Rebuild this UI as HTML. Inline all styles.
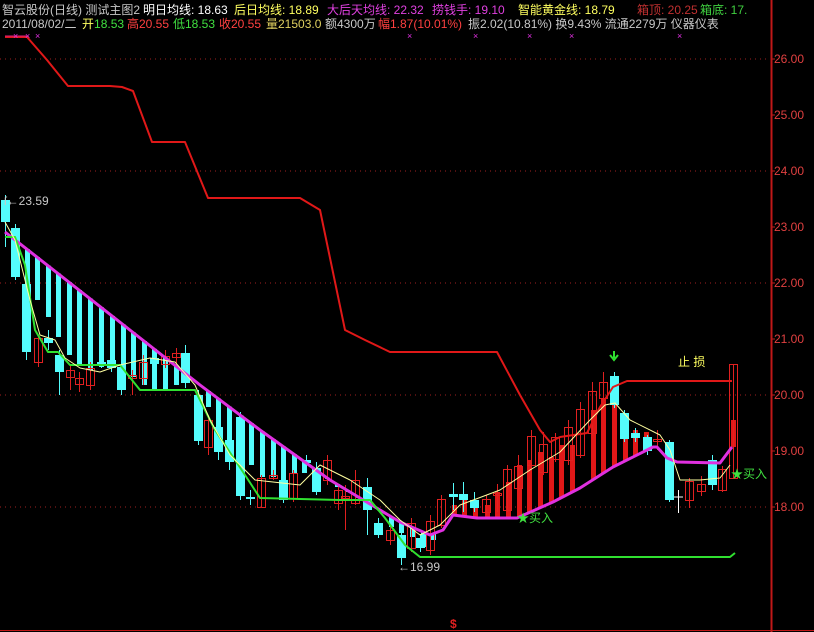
<!DOCTYPE html>
<html><head><meta charset="utf-8">
<style>
html,body{margin:0;padding:0;background:#000;}
body{width:814px;height:632px;overflow:hidden;position:relative;font-family:"Liberation Sans","Noto Sans CJK SC",sans-serif;font-size:12px;}
.t{position:absolute;white-space:nowrap;line-height:14px;}
svg{position:absolute;left:0;top:0;}
</style></head><body>
<svg id="s" width="814" height="632" viewBox="0 0 814 632"></svg>
<div class="t" style="left:2px;top:3px;color:#c8c8c8">智云股份(日线) 测试主图2</div>
<div class="t" style="left:143px;top:3px;color:#fff">明日均线: 18.63</div>
<div class="t" style="left:234px;top:3px;color:#ffff60">后日均线: 18.89</div>
<div class="t" style="left:327px;top:3px;color:#e040e0">大后天均线: 22.32</div>
<div class="t" style="left:432px;top:3px;color:#e040e0">捞钱手: 19.10</div>
<div class="t" style="left:518px;top:3px;color:#ffff60">智能黄金线: 18.79</div>
<div class="t" style="left:637px;top:3px;color:#c03030">箱顶: 20.25</div>
<div class="t" style="left:700px;top:3px;color:#40d040">箱底: 17.</div>
<div class="t" style="left:2px;top:17px;color:#c8c8c8">2011/08/02/二</div>
<div class="t" style="left:82px;top:17px;color:#ffff60">开<span style="color:#40e040">18.53</span></div>
<div class="t" style="left:127px;top:17px;color:#ff4040">高20.55</div>
<div class="t" style="left:173px;top:17px;color:#40e040">低18.53</div>
<div class="t" style="left:219px;top:17px;color:#ff4040">收20.55</div>
<div class="t" style="left:266px;top:17px;color:#e0d060">量21503.0</div>
<div class="t" style="left:325px;top:17px;color:#c8c8c8">额4300万</div>
<div class="t" style="left:378px;top:17px;color:#ff4040">幅1.87(10.01%)</div>
<div class="t" style="left:468px;top:17px;color:#c8c8c8">振2.02(10.81%) 换9.43% 流通2279万 仪器仪表</div>
<div class="t" style="left:774px;top:52px;color:#e04040">26.00</div>
<div class="t" style="left:774px;top:108px;color:#e04040">25.00</div>
<div class="t" style="left:774px;top:164px;color:#e04040">24.00</div>
<div class="t" style="left:774px;top:220px;color:#e04040">23.00</div>
<div class="t" style="left:774px;top:276px;color:#e04040">22.00</div>
<div class="t" style="left:774px;top:332px;color:#e04040">21.00</div>
<div class="t" style="left:774px;top:388px;color:#e04040">20.00</div>
<div class="t" style="left:774px;top:444px;color:#e04040">19.00</div>
<div class="t" style="left:774px;top:500px;color:#e04040">18.00</div>
<div class="t" style="left:4px;top:194px;color:#c8c8c8">ſ←23.59</div>
<div class="t" style="left:398px;top:560px;color:#c8c8c8">←16.99</div>
<div class="t" style="left:517px;top:511px;color:#40e040">★买入</div>
<div class="t" style="left:731px;top:467px;color:#40e040">★买入</div>
<div class="t" style="left:678px;top:355px;color:#ffff60">止 损</div>
<div class="t" style="left:450px;top:617px;color:#e02020;font-weight:bold">$</div>
<script>
var s=document.getElementById('s'),h='';
function L(pts,c,w){h+='<polyline fill="none" stroke="'+c+'" stroke-width="'+w+'" stroke-linejoin="round" points="'+pts.map(function(p){return p.join(',')}).join(' ')+'"/>';}
[59,171,283,395,507].forEach(function(y){h+='<line x1="0" y1="'+y+'" x2="770" y2="'+y+'" stroke="#a02020" stroke-dasharray="1,4"/>';});
[59,115,171,227,283,339,395,451,507].forEach(function(y){h+='<line x1="771" y1="'+y+'" x2="775" y2="'+y+'" stroke="#c02020"/>';});
h+='<line x1="771.5" y1="0" x2="771.5" y2="632" stroke="#c01818" stroke-width="2"/>';
h+='<line x1="0" y1="630.5" x2="814" y2="630.5" stroke="#c01818"/>';
var mag=[[5,232],[200,385],[260,430],[330,480],[400,522],[430,535],[443,530],[453,515],[477,518],[517,518],[553,502],[580,488],[613,467],[653,447],[657,447],[667,458],[677,462],[720,463],[732,447]];
function my(x){for(var i=0;i<mag.length-1;i++){if(x>=mag[i][0]&&x<=mag[i+1][0]){var a=mag[i],b=mag[i+1];return a[1]+(b[1]-a[1])*(x-a[0])/(b[0]-a[0]);}}return mag[mag.length-1][1];}
var cb=[[27,287],[37,300],[48,317],[58,337],[69,355],[79,365],[90,370],[101,367],[112,360],[123,367],[133,377],[144,385],[154,390],[165,390],[176,385],[208,407],[218,427],[229,440],[241,452],[251,465],[262,477],[273,477],[283,480],[294,473],[304,473],[315,468],[327,475],[337,487],[347,492],[358,493],[368,500],[379,507],[391,527],[401,533],[412,537],[423,547],[433,540]];
cb.forEach(function(b){var t=my(b[0]);h+='<rect x="'+(b[0]-2)+'" y="'+t+'" width="5" height="'+Math.max(1,b[1]-t)+'" fill="#54fcfc"/>';});
var rb=[[454,505],[464,500],[475,505],[487,505],[497,492],[508,482],[519,465],[529,460],[540,452],[551,457],[561,445],[572,445],[593,410],[603,398],[614,403],[625,430],[635,430],[646,432],[733,420]];
rb.forEach(function(b){var bt=my(b[0]);h+='<rect x="'+(b[0]-2)+'" y="'+b[1]+'" width="5" height="'+Math.max(1,bt-b[1])+'" fill="#e01818"/>';});
var C=[[5,200,222,195,247,'c'],[15,228,277,224,280,'c'],[26,284,352,280,360,'c'],[38,338,362,335,367,'r'],[48,338,343,330,350,'c'],[59,355,372,350,395,'c'],[70,370,377,365,390,'r'],[79,378,384,372,392,'r'],[90,368,385,362,390,'r'],[101,362,365,358,368,'c'],[111,360,368,355,372,'c'],[121,367,390,362,395,'c'],[132,375,378,370,395,'r'],[143,362,378,355,385,'r'],[154,358,364,350,368,'c'],[165,356,364,350,368,'r'],[176,353,357,348,365,'r'],[185,353,383,345,388,'c'],[198,395,441,390,445,'c'],[208,420,447,415,455,'r'],[218,427,452,420,460,'c'],[229,440,462,433,470,'c'],[240,417,496,412,500,'c'],[250,497,499,490,505,'c'],[261,478,507,475,508,'r'],[273,475,478,470,480,'r'],[283,480,500,476,503,'c'],[293,473,498,470,502,'r'],[306,460,463,455,470,'c'],[316,468,492,462,495,'c'],[327,460,480,455,485,'r'],[338,490,503,485,510,'r'],[345,496,498,485,530,'r'],[355,480,503,470,505,'r'],[367,487,510,478,535,'c'],[378,523,535,518,538,'c'],[390,530,540,525,545,'r'],[401,535,558,530,565,'c'],[411,523,548,518,552,'r'],[420,538,548,534,552,'c'],[430,521,550,515,555,'r'],[441,499,525,495,528,'r'],[453,494,497,483,510,'c'],[463,494,500,482,512,'c'],[474,500,508,492,512,'c'],[486,499,512,495,515,'r'],[497,493,495,484,512,'r'],[507,469,510,465,512,'r'],[518,466,488,455,490,'r'],[531,436,465,430,470,'r'],[543,444,472,432,475,'r'],[555,437,459,433,462,'r'],[568,427,460,420,465,'r'],[580,409,455,402,458,'r'],[592,391,433,382,436,'r'],[603,382,398,372,410,'r'],[614,376,405,372,408,'c'],[624,413,439,410,442,'c'],[635,433,438,428,442,'c'],[647,437,451,435,455,'c'],[657,439,441,430,450,'r'],[669,442,500,440,502,'c'],[678,497,499,490,513,'w'],[689,481,500,478,508,'r'],[701,484,491,476,496,'r'],[712,460,485,455,490,'c'],[722,469,490,466,492,'r'],[733,364,478,364,478,'r']];
C.forEach(function(c){var x=c[0],col=c[5];var st=col=='c'?'#54fcfc':col=='w'?'#fff':'#e02020';
h+='<line x1="'+(x+.5)+'" y1="'+c[3]+'" x2="'+(x+.5)+'" y2="'+c[4]+'" stroke="'+st+'"/>';
var hh=Math.max(1,c[2]-c[1]);
if(col=='c')h+='<rect x="'+(x-4)+'" y="'+c[1]+'" width="9" height="'+hh+'" fill="#54fcfc"/>';
else if(col=='w')h+='<line x1="'+(x-4)+'" y1="'+c[1]+'" x2="'+(x+5)+'" y2="'+c[1]+'" stroke="#fff"/>';
else h+='<rect x="'+(x-3.5)+'" y="'+(c[1]+.5)+'" width="8" height="'+hh+'" fill="none" stroke="#e02020"/>';});
L([[5,37],[27,37],[47,60],[68,86],[110,86],[122,87],[133,91],[152,142],[185,142],[208,198],[300,198],[320,210],[345,330],[365,340],[390,352],[497,352],[520,395],[540,430],[550,442],[560,437],[587,433],[600,407],[613,387],[627,381],[732,381]],'#e01818',2);
L(mag,'#e030e0',3);
L([[5,237],[15,237],[25,265],[35,330],[48,352],[58,352],[70,365],[120,365],[140,390],[195,390],[215,430],[245,475],[260,498],[340,500],[370,500],[385,518],[405,545],[420,557],[730,557],[735,553]],'#30e030',2);
L([[5,222],[15,240],[30,300],[40,335],[55,340],[65,358],[80,368],[100,372],[120,365],[150,358],[175,362],[195,385],[210,420],[230,455],[255,480],[300,485],[320,465],[350,480],[380,500],[400,520],[420,535],[440,525],[460,505],[500,490],[530,470],[560,452],[590,420],[605,405],[615,403],[630,420],[660,435],[670,450],[680,480],[700,480],[720,478],[730,465]],'#ffffa0',1);
h+='<line x1="5" y1="36" x2="27" y2="36" stroke="#e02080"/>';
[[16,36],[28,36],[38,36],[410,36],[476,36],[530,36],[572,36],[680,36]].forEach(function(p){h+='<text x="'+(p[0]-3)+'" y="'+(p[1]+3)+'" fill="#e030e0" font-size="9" font-family="Liberation Sans">×</text>';});
h+='<path d="M614 351 v7 M610 355 l4 5 l4 -5" stroke="#30e030" stroke-width="2" fill="none"/>';
s.innerHTML=h;
</script>
</body></html>
